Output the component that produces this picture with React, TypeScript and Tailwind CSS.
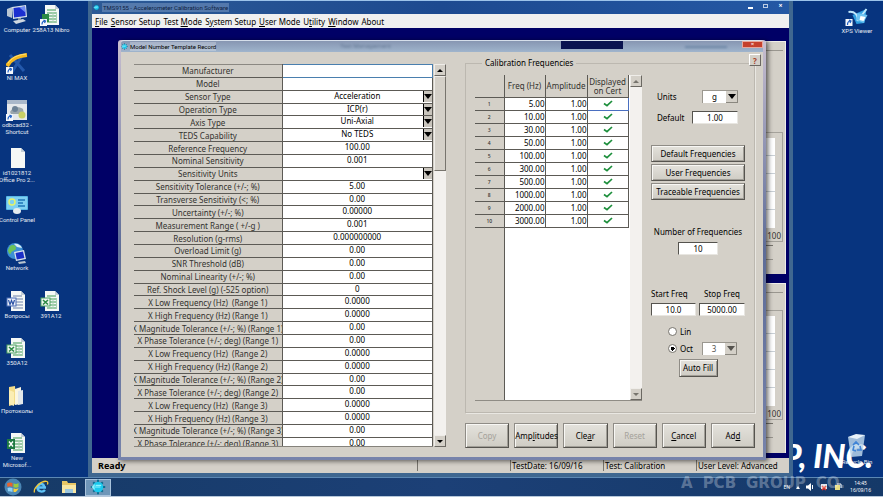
import { useState } from 'react'
import type { ReactNode } from 'react'
import clsx from 'clsx'

type TemplateField = { label: string; value: string; options?: string[] }

const templateFields: TemplateField[] = [
  { label: 'Manufacturer', value: '' },
  { label: 'Model', value: '' },
  { label: 'Sensor Type', value: 'Acceleration', options: ['Acceleration'] },
  { label: 'Operation Type', value: 'ICP(r)', options: ['ICP(r)'] },
  { label: 'Axis Type', value: 'Uni-Axial', options: ['Uni-Axial'] },
  { label: 'TEDS Capability', value: 'No TEDS', options: ['No TEDS'] },
  { label: 'Reference Frequency', value: '100.00' },
  { label: 'Nominal Sensitivity', value: '0.001' },
  { label: 'Sensitivity Units', value: '', options: [''] },
  { label: 'Sensitivity Tolerance (+/-; %)', value: '5.00' },
  { label: 'Transverse Sensitivity (<; %)', value: '0.00' },
  { label: 'Uncertainty (+/-; %)', value: '0.00000' },
  { label: 'Measurement Range ( +/-g )', value: '0.001' },
  { label: 'Resolution (g-rms)', value: '0.000000000' },
  { label: 'Overload Limit (g)', value: '0.00' },
  { label: 'SNR Threshold (dB)', value: '0.00' },
  { label: 'Nominal Linearity (+/-; %)', value: '0.00' },
  { label: 'Ref. Shock Level (g) (-525 option)', value: '0' },
  { label: 'X Low Frequency (Hz)  (Range 1)', value: '0.0000' },
  { label: 'X High Frequency (Hz) (Range 1)', value: '0.0000' },
  { label: 'X Magnitude Tolerance (+/-; %) (Range 1)', value: '0.00' },
  { label: 'X Phase Tolerance (+/-; deg) (Range 1)', value: '0.00' },
  { label: 'X Low Frequency (Hz)  (Range 2)', value: '0.0000' },
  { label: 'X High Frequency (Hz) (Range 2)', value: '0.0000' },
  { label: 'X Magnitude Tolerance (+/-; %) (Range 2)', value: '0.00' },
  { label: 'X Phase Tolerance (+/-; deg) (Range 2)', value: '0.00' },
  { label: 'X Low Frequency (Hz)  (Range 3)', value: '0.0000' },
  { label: 'X High Frequency (Hz) (Range 3)', value: '0.0000' },
  { label: 'X Magnitude Tolerance (+/-; %) (Range 3)', value: '0.00' },
  { label: 'X Phase Tolerance (+/-; deg) (Range 3)', value: '0.00' }
]

const frequencies = ['5.00', '10.00', '30.00', '50.00', '100.00', '300.00', '500.00', '1000.00', '2000.00', '3000.00']

// [before, access key, after]
const menus = [
  ['', 'F', 'ile'],
  ['', 'S', 'ensor Setup'],
  ['Test ', 'M', 'ode'],
  ['S', 'y', 'stem Setup'],
  ['', 'U', 'ser Mode'],
  ['U', 't', 'ility'],
  ['', 'W', 'indow'],
  ['About', '', '']
]

/* ---------- Desktop icons ---------- */

function ShortcutArrow() {
  return (
    <g>
      <rect x="0" y="15" width="7" height="7" fill="#f4f7fb" />
      <path d="M2 20.500c0-2.500 1-3.500 3-3.500M3.500 16l2 1-1 2" stroke="#1d5fc4" strokeWidth="1.200" fill="none" />
    </g>
  )
}

function ComputerIcon() {
  return (
    <svg viewBox="0 0 22 22" className="w-[22px] h-[22px]" aria-hidden="true">
      <path d="M1 5l5-2v11l-5-2z" fill="#b9c6d2" />
      <path d="M6 3l14-2 1 12-14 2z" fill="#d8e2ea" />
      <path d="M7.500 4l11.500-1.500.7 9.500-11.700 1.500z" fill="#1b2fd0" />
      <path d="M13 3.200l6-.7.5 6z" fill="#6f8cf5" />
      <path d="M7 17l10-2 3 2-10 3z" fill="#cfd8e0" />
      <path d="M12 14h3v2h-3z" fill="#8a98a6" />
    </svg>
  )
}

function SheetIcon({ badge, shortcut }: { badge: 'excel' | 'word' | 'none' | 'excel-solid'; shortcut?: boolean }) {
  const line = badge === 'word' ? '#9aa9c4' : '#7cb98a'
  return (
    <svg viewBox="0 0 22 22" className="w-[22px] h-[22px]" aria-hidden="true">
      <path d="M5 1h10l4 4v16H5z" fill="#f5f8f6" />
      <path d="M15 1l4 4h-4z" fill="#c4ced6" />
      {badge !== 'none' && <path d="M7 6h9M7 9h10M7 12h10M7 15h10M7 18h10" stroke={line} strokeWidth="1.400" />}
      {badge.startsWith('excel') && <path d="M13 8v11M16.500 8v11" stroke="#a8d4b2" strokeWidth="1" />}
      {badge === 'excel' && !shortcut && (
        <>
          <rect x="1" y="8" width="9" height="8" fill="#f0f6f1" stroke="#4fa363" />
          <path d="M3 10l5 4.500M8 10l-5 4.500" stroke="#2c8a45" strokeWidth="1.600" />
        </>
      )}
      {badge === 'excel-solid' && (
        <>
          <rect x="1" y="7" width="8" height="10" fill="#1f7a42" />
          <path d="M3 9.500l4 5M7 9.500l-4 5" stroke="#fff" strokeWidth="1.400" />
        </>
      )}
      {badge === 'word' && (
        <>
          <rect x="1" y="8" width="9" height="8" fill="#eef2fa" stroke="#4a6db5" />
          <path d="M2.500 10l1.500 4.500 1.500-4 1.500 4L8.500 10" stroke="#2a52a5" strokeWidth="1.200" fill="none" />
        </>
      )}
      {shortcut && (
        <>
          <rect x="2" y="10" width="7" height="8" fill="#2c8a45" />
          <ShortcutArrow />
        </>
      )}
    </svg>
  )
}

function CurveIcon() {
  return (
    <svg viewBox="0 0 22 22" className="w-[22px] h-[22px]" aria-hidden="true">
      <path d="M4 3l14 16M16 4L6 20" stroke="#2358ab" strokeWidth="3" />
      <path d="M1 14C4 8 9 4 21 3" stroke="#f5b81f" strokeWidth="4" fill="none" />
      <path d="M2 11.500C5 6 11 3 20 2" stroke="#ffe27a" strokeWidth="1" fill="none" />
      <ShortcutArrow />
    </svg>
  )
}

function ProgramIcon() {
  return (
    <svg viewBox="0 0 22 22" className="w-[22px] h-[22px]" aria-hidden="true">
      <rect x="1" y="1" width="20" height="20" fill="#e6e9ec" />
      <rect x="1" y="1" width="20" height="4" fill="#aab8ca" />
      <path d="M4 13c2-5 9-6 13-3l1 5H5z" fill="#9aa6ad" />
      <circle cx="9" cy="10" r="3" fill="#6d8296" />
      <circle cx="16" cy="16" r="3.500" fill="#c9cf66" />
      <ShortcutArrow />
    </svg>
  )
}

function ControlPanelIcon() {
  return (
    <svg viewBox="0 0 22 22" className="w-[22px] h-[22px]" aria-hidden="true">
      <rect x="0" y="2" width="22" height="14" rx="1" fill="#58b7e6" />
      <rect x="1" y="3" width="20" height="12" fill="#7fd0f2" />
      <circle cx="6" cy="8" r="3" fill="none" stroke="#e4f36b" strokeWidth="1.500" />
      <path d="M12 6h7M12 9h5M12 12h7" stroke="#1f76b8" strokeWidth="1.500" />
      <ellipse cx="11" cy="17" rx="4" ry="3" fill="#e5ebef" />
    </svg>
  )
}

function NetworkIcon() {
  return (
    <svg viewBox="0 0 22 22" className="w-[22px] h-[22px]" aria-hidden="true">
      <circle cx="9" cy="9" r="8" fill="#3c8fd4" />
      <path d="M4 4c3-2 6-1 6 2s-4 2-5 5-3-1-3-3zM11 11c3-1 4 1 3 4l-4 1z" fill="#6cc35a" />
      <path d="M8 2c3-1 7 1 8 4l-5-1z" fill="#d8eef7" />
      <path d="M8 10l10-2 2 9-10 2z" fill="#dbe3ec" />
      <path d="M9.500 11l7.500-1.500 1.400 6.500-7.600 1.600z" fill="#1b2fc8" />
      <path d="M12 20l7-1 1 2-7 1z" fill="#b8c4ce" />
    </svg>
  )
}

function FolderIcon() {
  return (
    <svg viewBox="0 0 22 22" className="w-[22px] h-[22px]" aria-hidden="true">
      <path d="M3 2l6-1 1 18-7 2z" fill="#f3dd8a" />
      <path d="M9 4l6-2v17l-6 1z" fill="#fbf6e0" />
      <path d="M12 6l5-1v14l-5 1z" fill="#e2e7ea" />
      <path d="M3 5l5 2v14l-5-2z" fill="#fbeeb4" />
    </svg>
  )
}

function XpsIcon() {
  return (
    <svg viewBox="0 0 24 20" className="w-[25px] h-[20px]" aria-hidden="true">
      <path d="M7 8l14-6-2 14-8 1z" fill="#2f9fe0" />
      <path d="M3 5c6-1 10 3 9 9l9-12" fill="none" stroke="#bfe6fb" strokeWidth="2" />
      <path d="M12 6l10 2-4 8-7-3z" fill="#6ec4f2" />
      <path d="M15 9l5 1-2 4-4-1z" fill="#fff" />
      <rect x="0" y="12" width="7" height="7" fill="#f4f7fb" />
      <path d="M2 18c0-3 1-4 3-4M3.500 13l2 1-1 2" stroke="#1d5fc4" strokeWidth="1.200" fill="none" />
    </svg>
  )
}

function RecycleBinIcon() {
  return (
    <svg viewBox="0 0 20 24" className="w-[20px] h-[24px]" aria-hidden="true">
      <path d="M1 3l17-2-3 21-11 1z" fill="#b9d3ea" opacity="0.850" />
      <path d="M1 3l8-3 9 1-8 4z" fill="#e8f2fa" />
      <path d="M6 11l3-3 3 3M13 12l1 4h-4M9 17l-3-1 1-4" stroke="#3f83d6" strokeWidth="1.600" fill="none" />
    </svg>
  )
}

function AppIcon({ className }: { className: string }) {
  return (
    <svg viewBox="0 0 20 20" className={className} aria-hidden="true">
      <path d="M10 1v18M1 10h18M4 4l12 12M16 4L4 16" stroke="#0b6f92" strokeWidth="2.500" />
      <circle cx="10" cy="10" r="6.500" fill="#19c9ee" />
      <path d="M3 10h10M6 7l-3 3 3 3M7 8h7" stroke="#8df3ff" strokeWidth="1.500" fill="none" />
    </svg>
  )
}

const desktopRows: { icon: ReactNode; label: string }[][] = [
  [{ icon: <ComputerIcon />, label: 'Computer' }, { icon: <SheetIcon badge="excel" shortcut />, label: '258A13 Nibro' }],
  [{ icon: <CurveIcon />, label: 'NI MAX' }],
  [{ icon: <ProgramIcon />, label: 'odbcad32 -\nShortcut' }],
  [{ icon: <SheetIcon badge="none" />, label: 'id1021812\nOffice Pro 2...' }],
  [{ icon: <ControlPanelIcon />, label: 'Control Panel' }],
  [{ icon: <NetworkIcon />, label: 'Network' }],
  [{ icon: <SheetIcon badge="word" />, label: 'Вопросы' }, { icon: <SheetIcon badge="excel" />, label: '391A12' }],
  [{ icon: <SheetIcon badge="excel" />, label: '350A12' }],
  [{ icon: <FolderIcon />, label: 'Протоколы' }],
  [{ icon: <SheetIcon badge="excel-solid" />, label: 'New\nMicrosof...' }]
]

function DesktopIcon({ icon, label }: { icon: ReactNode; label: string }) {
  return (
    <button className="flex w-[34px] flex-col items-center text-center font-[Roboto,sans-serif] text-[6px] leading-[7px] text-white/90">
      {icon}
      <span className="whitespace-pre">{label}</span>
    </button>
  )
}

/* ---------- Classic controls ---------- */

function PushButton({ children, className, disabled }: { children: ReactNode; className?: string; disabled?: boolean }) {
  return (
    <button
      disabled={disabled}
      className={clsx(
        'border border-t-[#8f8c86] border-l-[#8f8c86] border-r-[#56544f] border-b-[#56544f] bg-linear-to-b from-[#e4e2dc] to-[#cfccc4] text-center whitespace-nowrap',
        'shadow-[inset_1px_1px_0_#f8f7f4,inset_-1px_-1px_0_#a19e97]',
        disabled ? 'text-[#a5a29b]' : 'text-black',
        className
      )}
    >
      {children}
    </button>
  )
}

function DownArrow() {
  return (
    <svg viewBox="0 0 8 5" className="h-[5px] w-[8px]" aria-hidden="true">
      <path d="M0 0h8L4 5z" fill="currentColor" />
    </svg>
  )
}

function DropDown({ id, value, options, className, label }: { id?: string; value: string; options: string[]; className?: string; label?: string }) {
  return (
    <div className={clsx('flex h-[13px] border-t border-l border-[#9a978f] bg-white', className)}>
      <select
        id={id}
        aria-label={label}
        defaultValue={value}
        className="min-w-0 flex-1 appearance-none text-center [text-align-last:center] leading-[12px] outline-none"
      >
        {options.map((o) => <option key={o}>{o}</option>)}
      </select>
      <span className="flex w-[12px] items-center justify-center border-r border-b border-[#8a877f] bg-[#d4d0c8]">
        <DownArrow />
      </span>
    </div>
  )
}

const sunken = 'h-[13px] border border-t-[#55534e] border-l-[#55534e] border-r-[#e8e6e1] border-b-[#e8e6e1] bg-white text-center leading-[11px] outline-none'

function ScrollArrow({ up }: { up?: boolean }) {
  return (
    <button
      aria-label={up ? 'Scroll up' : 'Scroll down'}
      className="flex h-[12px] w-full items-center justify-center border border-t-[#efede9] border-l-[#efede9] border-r-[#6b6862] border-b-[#6b6862] bg-[#d4d0c8]"
    >
      <svg viewBox="0 0 6 3" className="h-[3px] w-[6px]" aria-hidden="true">
        <path d={up ? 'M0 3h6L3 0z' : 'M0 0h6L3 3z'} fill="currentColor" />
      </svg>
    </button>
  )
}

/* ---------- Dialog ---------- */

function TemplateTable() {
  return (
    <div className="flex min-h-0 gap-px">
      <div className="min-w-0 flex-1 overflow-hidden border-b border-[#85827b]">
        <table className="h-[387px] w-full table-fixed border-collapse">
          <colgroup>
            <col className="w-[148px]" />
            <col />
          </colgroup>
          <tbody>
            {templateFields.map((f, i) => (
              <tr key={f.label}>
                <th scope="row" className="overflow-hidden border-y border-r border-[#5c5a55] border-t-[#8b8882] p-0 font-normal">
                  <label htmlFor={`field-${i}`} className="flex h-[11px] items-end justify-center leading-[10px] whitespace-pre text-[#33322f]">
                    {f.label}
                  </label>
                </th>
                <td className={clsx('border bg-white p-0 align-top', i === 0 ? 'border-[#4a7fae]' : 'border-[#5c5a55]')}>
                  {f.options ? (
                    <div className="flex h-[11px]">
                      <select
                        id={`field-${i}`}
                        defaultValue={f.value}
                        className="h-[10px] min-w-0 flex-1 appearance-none pl-[9px] text-center [text-align-last:center] leading-[10px] outline-none"
                      >
                        {f.options.map((o) => <option key={o}>{o}</option>)}
                      </select>
                      <span className="flex w-[9px] items-center justify-center border-l border-black bg-[#c9c5bd]">
                        <DownArrow />
                      </span>
                    </div>
                  ) : (
                    <input id={`field-${i}`} defaultValue={f.value} className="block h-[10px] w-full text-center leading-[10px] outline-none" />
                  )}
                </td>
              </tr>
            ))}
          </tbody>
        </table>
      </div>
      <div className="flex w-[12px] flex-col bg-[#f3f1ee]">
        <ScrollArrow up />
        <div className="h-[95px] border border-t-[#efede9] border-l-[#efede9] border-r-[#77746d] border-b-[#77746d] bg-[#d4d0c8]" />
        <div className="flex-1" />
        <ScrollArrow />
      </div>
    </div>
  )
}

function FrequencyTable() {
  return (
    <div className="flex w-[167px] border-b border-[#8f8c85]">
      <table className="h-full w-[153px] table-fixed border-collapse bg-white">
        <colgroup>
          <col className="w-[29px]" />
          <col className="w-[41px]" />
          <col className="w-[42px]" />
          <col className="w-[41px]" />
        </colgroup>
        <thead>
          <tr className="h-[22px] bg-[#d4d0c8] leading-[9px] text-[#33322f]">
            <th className="border-r border-b border-[#5c5a55] p-0" aria-label="Row" />
            <th className="border-r border-b border-[#5c5a55] p-0 font-normal">Freq (Hz)</th>
            <th className="border-r border-b border-[#5c5a55] p-0 font-normal">Amplitude</th>
            <th className="border-r border-b border-[#5c5a55] p-0 font-normal">Displayed on Cert</th>
          </tr>
        </thead>
        <tbody>
          {frequencies.map((freq, i) => (
            <tr key={freq} className="h-[13px]">
              <th scope="row" className="border border-l-0 border-[#5c5a55] bg-[#d4d0c8] p-0 text-[5px] leading-[10px] font-medium text-[#33322f]">
                {i + 1}
              </th>
              <td className="border border-[#5c5a55] p-0 text-right leading-[10px]">{freq}</td>
              <td className="border border-[#5c5a55] p-0 text-right leading-[10px]">1.00</td>
              <td className={clsx('border p-0', i === 0 ? 'border-[#4a6fc0]' : 'border-[#5c5a55]')}>
                <svg viewBox="0 0 10 7" className="mx-auto h-[7px] w-[10px]" role="img" aria-label="Displayed">
                  <path d="M1 3.500l3 2.200L9 1" fill="none" stroke="#1d8f3c" strokeWidth="1.700" />
                </svg>
              </td>
            </tr>
          ))}
          <tr>
            <td className="border-r border-[#5c5a55] bg-[#d4d0c8] p-0" />
            <td colSpan={3} className="p-0" />
          </tr>
        </tbody>
      </table>
      <div className="w-[2px] bg-white" />
      <div className="flex w-[12px] flex-col bg-[#f3f1ee] text-[#77746d]">
        <ScrollArrow up />
        <div className="flex-1" />
        <ScrollArrow />
      </div>
    </div>
  )
}

function FrequencyControls() {
  const [spacing, setSpacing] = useState('oct')

  return (
    <div className="flex w-[94px] flex-col">
      <div className="mt-[15px] flex items-center justify-between pr-[7px] pl-[6px]">
        <label htmlFor="units">Units</label>
        <DropDown id="units" value="g" options={['g']} className="w-[36px]" />
      </div>
      <div className="mt-2 flex items-center justify-between pr-[7px] pl-[6px]">
        <label htmlFor="default-amp">Default</label>
        <input id="default-amp" defaultValue="1.00" className={clsx(sunken, 'w-[46px]')} />
      </div>

      <div className="mt-[21px] flex flex-col gap-[2px]">
        <PushButton className="h-[17px]">Default Frequencies</PushButton>
        <PushButton className="h-[17px]">User Frequencies</PushButton>
        <PushButton className="h-[17px]">Traceable Frequencies</PushButton>
      </div>

      <div className="mt-[26px] flex flex-col items-center gap-1">
        <label htmlFor="freq-count" className="leading-[12px] whitespace-nowrap">Number of Frequencies</label>
        <input id="freq-count" defaultValue="10" className={clsx(sunken, 'w-[40px]')} />
      </div>

      <div className="mt-[33px] flex justify-between">
        <div className="flex flex-col gap-[3px]">
          <label htmlFor="start-freq" className="leading-[12px]">Start Freq</label>
          <input id="start-freq" defaultValue="10.0" className={clsx(sunken, 'w-[45px]')} />
        </div>
        <div className="flex flex-col items-center gap-[3px]">
          <label htmlFor="stop-freq" className="leading-[12px]">Stop Freq</label>
          <input id="stop-freq" defaultValue="5000.00" className={clsx(sunken, 'w-[46px]')} />
        </div>
      </div>

      <div className="mt-[9px] flex flex-col gap-1 pl-[17px]">
        <label className="flex h-[13px] items-center gap-[3px]">
          <input
            type="radio"
            name="spacing"
            checked={spacing === 'lin'}
            onChange={() => setSpacing('lin')}
            className="h-[9px] w-[9px] appearance-none rounded-full border border-[#77746d] bg-white checked:bg-[radial-gradient(circle,#000_2px,#fff_2px)]"
          />
          Lin
        </label>
        <div className="flex h-[13px] items-center">
          <label className="flex items-center gap-[3px]">
            <input
              type="radio"
              name="spacing"
              checked={spacing === 'oct'}
              onChange={() => setSpacing('oct')}
              className="h-[9px] w-[9px] appearance-none rounded-full border border-[#77746d] bg-white checked:bg-[radial-gradient(circle,#000_2px,#fff_2px)]"
            />
            Oct
          </label>
          <DropDown label="Steps per octave" value="3" options={['3']} className="mr-[8px] ml-auto w-[35px] text-[#55534e]" />
        </div>
      </div>

      <PushButton className="mt-1 h-[18px] w-[39px] self-center">Auto Fill</PushButton>
    </div>
  )
}

function TemplateDialog() {
  return (
    <section
      aria-label="Model Number Template Record"
      className="absolute top-[39px] right-[117px] bottom-[17px] left-[118px] flex flex-col rounded-t-[3px] bg-linear-to-b from-[#c9bfd0] via-[#5d6c98] to-[#7783ab] px-[3px] pb-[3px] shadow-[2px_1px_5px_rgba(0,0,0,0.6)]"
    >
      <header className="flex h-[12px] shrink-0 items-center rounded-t-[3px] border-t border-[#d5deea] bg-linear-to-b from-[#8796b2] to-[#9fb4cc]">
        <AppIcon className="h-[7px] w-[7px]" />
        <h2 className="ml-[2px] bg-white/25 font-[Roboto,sans-serif] text-[6px] leading-[9px] text-black">Model Number Template Record</h2>
        <span className="ml-[124px] text-[6px] leading-[9px] text-[#4d6480] opacity-70 blur-[1px]">Test Management</span>
        <div className="ml-auto h-[8px] w-[62px] self-start bg-[#0a1350]" />
        <div className="mr-[15px] ml-[62px] h-[2px] w-[42px] bg-[#6d87a6] blur-[1px]" />
        <button aria-label="Close" className="flex h-[7px] w-[21px] items-center justify-center self-start border border-[#e7a79b] bg-[#c5402c] text-[6px] leading-[5px] text-white">
          ×
        </button>
      </header>

      <div className="relative grid min-h-0 flex-1 grid-cols-[minmax(0,1fr)_290px] grid-rows-[minmax(0,1fr)] gap-[19px] bg-[#d4d0c8] pr-[8px] pl-[13px]">
        <div className="mt-3 mb-[10px] grid min-h-0 grid-rows-[minmax(0,1fr)]">
          <TemplateTable />
        </div>

        <div className="flex min-h-0 flex-col pt-[5px] pb-[9px]">
          <fieldset className="flex flex-1 flex-col border border-[#bcb8b0] px-[9px] pb-[11px] shadow-[1px_1px_0_#e9e7e2]">
            <legend className="ml-[7px] px-[3px] leading-[12px]">Calibration Frequencies</legend>
            <div className="flex flex-1 justify-between pt-[6px]">
              <FrequencyTable />
              <FrequencyControls />
            </div>
          </fieldset>

          <div className="mt-[10px] grid grid-cols-6 gap-[5px]">
            <PushButton className="h-[25px]" disabled>Copy</PushButton>
            <PushButton className="h-[25px]">Amp<u>l</u>itudes</PushButton>
            <PushButton className="h-[25px]">Cle<u>a</u>r</PushButton>
            <PushButton className="h-[25px]" disabled>Reset</PushButton>
            <PushButton className="h-[25px]"><u>C</u>ancel</PushButton>
            <PushButton className="h-[25px]">Ad<u>d</u></PushButton>
          </div>
        </div>

        <button
          aria-label="Help"
          className="absolute top-[2px] right-[2px] h-[12px] w-[12px] border border-t-white border-l-white border-r-[#6b6862] border-b-[#6b6862] bg-[#d4d0c8] leading-[9px] font-bold text-[#a8442a]"
        >
          ?
        </button>
      </div>
    </section>
  )
}

/* ---------- Main window ---------- */

function ChartWindow({ plotClass }: { plotClass: string }) {
  return (
    <div className="flex min-h-0 flex-col items-end border-t border-r border-[#efede9] bg-[#d4d0c8] pr-[2px]">
      <div className="mt-[8px] h-px w-[60px] bg-[#99968f]" />
      <div className={clsx('flex h-[110px] w-[60px] flex-col border border-[#a5a29b] pt-[5px]', plotClass)}>
        <div className="mr-[7px] ml-auto grid h-[90px] w-[50px] grid-rows-5 divide-y divide-[#c9d0d6] bg-white">
          <div /><div /><div /><div /><div />
        </div>
        <span className="mt-[3px] pr-px text-right leading-[10px] text-[#33322f]">100</span>
      </div>
      <div className="mt-[3px] mr-[10px] h-px w-[50px] bg-[#77746d]" />
      <div className="mt-[13px] mr-[10px] h-px w-[50px] bg-[#99968f]" />
    </div>
  )
}

function MainWindow() {
  return (
    <main className="absolute inset-y-0 right-[90px] left-[88px] flex flex-col border-x-4 border-b-4 border-[#3f6790] bg-[#1d4a8c]">
      <header className="flex h-[13px] shrink-0 items-center bg-linear-to-r from-[#2c5a96] via-[#1d4a90] to-[#2458a4]">
        <AppIcon className="ml-px h-[7px] w-[7px]" />
        <h1 className="ml-[2px] bg-[#7f9cc4]/50 px-px font-[Roboto,sans-serif] text-[6px] leading-[9px] text-[#0d2142]">TMS9155 - Accelerometer Calibration Software</h1>
        <div className="mr-1 ml-auto flex h-[10px] items-center gap-[6px] self-start text-[7px] leading-[8px] text-white">
          <button aria-label="Minimize" className="w-[9px]"><span className="mx-auto mt-[3px] block h-[2px] w-[5px] bg-white" /></button>
          <button aria-label="Maximize" className="w-[9px]"><span className="mx-auto block h-[4px] w-[5px] border border-white/70" /></button>
          <button aria-label="Close" className="w-[9px] font-bold">×</button>
        </div>
      </header>

      <nav className="flex h-[14px] shrink-0 items-center gap-[3px] bg-[#f0f0f0] pl-[3px] leading-[13px]">
        {menus.map(([pre, key, post]) => (
          <button key={pre + key + post} className="whitespace-nowrap">
            {pre}<u>{key}</u>{post}
          </button>
        ))}
      </nav>

      <div className="grid min-h-0 flex-1 grid-rows-[233px_1fr] gap-[9px] bg-[#000066] pt-[13px] pr-[3px] pb-[5px] pl-[600px]">
        <ChartWindow plotClass="mt-[81px]" />
        <ChartWindow plotClass="mt-[17px]" />
      </div>

      <footer className="flex h-[15px] shrink-0 items-stretch bg-[#d4d0c8] py-[2px] leading-[12px]">
        <strong className="flex-1 pl-[6px] text-[9px]">Ready</strong>
        <span className="w-[93px] border-l border-[#77746d]" />
        <span className="w-[93px] border-l border-[#77746d] pl-px">TestDate: 16/09/16</span>
        <span className="w-[93px] border-l border-[#77746d] pl-px">Test: Calibration</span>
        <span className="w-[93px] border-l border-[#77746d] pl-px">User Level: Advanced</span>
      </footer>
    </main>
  )
}

/* ---------- Taskbar ---------- */

function Taskbar() {
  return (
    <footer className="flex h-[20px] shrink-0 items-center border-t border-b border-t-[#5c88b4] border-b-[#b5c7da] bg-linear-to-r from-[#163a66] via-[#1c4077] to-[#153968]">
      <button aria-label="Start" className="ml-[4px]">
        <svg viewBox="0 0 18 18" className="h-[18px] w-[18px]" aria-hidden="true">
          <circle cx="9" cy="9" r="8.500" fill="#4a86b4" />
          <path d="M3 5.500C5 4 7 4.500 8.500 5v4C7 8 5 8 3.500 9z" fill="#e8622c" />
          <path d="M9.500 5.300c2 1 3.500.7 5-.3v4c-1.500 1-3 1-5 .3z" fill="#9bcb3c" />
          <path d="M3.500 10C5 9 7 9.500 8.500 10v4C7 13.500 5 13 4 13.500z" fill="#8fd2f8" />
          <path d="M9.500 10.300c2 1 3.500.7 5-.3-.5 2-1.500 3-2.500 3.700-1 .3-1.700.3-2.500 0z" fill="#fbd03a" />
        </svg>
      </button>
      <button aria-label="Internet Explorer" className="ml-[11px]">
        <svg viewBox="0 0 16 16" className="h-[16px] w-[16px]" aria-hidden="true">
          <path d="M13 8.500H4.500C5 6 6.500 5 8 5s3 1 3.200 3M4.500 9c.5 4 5.500 4.500 7.500 2" fill="none" stroke="#5ec2f5" strokeWidth="2.300" />
          <path d="M1.500 13.500C0 9 9 1 14 2.500c1 .5 1 2 .3 3" fill="none" stroke="#f4c93a" strokeWidth="1.300" />
        </svg>
      </button>
      <button aria-label="Explorer" className="ml-[12px]">
        <svg viewBox="0 0 16 14" className="h-[14px] w-[16px]" aria-hidden="true">
          <path d="M1 1h5l1 2h8v10H1z" fill="#e8c766" />
          <path d="M1 5h14v8H1z" fill="#f8e7a4" />
          <path d="M4 9h8v4H4z" fill="#9cc7e0" />
        </svg>
      </button>
      <button aria-label="TMS9155" className="ml-[8px] flex h-[17px] w-[26px] items-center justify-center border border-[#a9c3dc] bg-[#6f96b8]">
        <AppIcon className="h-[16px] w-[16px]" />
      </button>

      <div className="ml-auto flex items-center gap-[6px] pr-[12px] text-[5px] leading-[7px] text-white">
        <span>EN</span>
        <svg viewBox="0 0 4 3" className="h-[3px] w-[4px]" aria-hidden="true"><path d="M0 3l2-3 2 3z" fill="#fff" /></svg>
        <svg viewBox="0 0 8 8" className="h-[8px] w-[8px]" aria-hidden="true">
          <path d="M0 2.500h2L5 0v8L2 5.500H0z" fill="#fff" />
          <path d="M6.500 2v4" stroke="#fff" />
        </svg>
        <svg viewBox="0 0 8 8" className="h-[8px] w-[8px]" aria-hidden="true">
          <path d="M1 1h6v5H1z" fill="#dfe6ee" />
          <path d="M2 3l4 4M6 3L2 7" stroke="#e0362c" strokeWidth="1.600" />
        </svg>
        <svg viewBox="0 0 8 8" className="h-[8px] w-[8px]" aria-hidden="true">
          <path d="M1 2h5v5H1z" fill="#e9dd83" />
          <path d="M3 1h4v4" fill="none" stroke="#f4f7fb" />
        </svg>
        <time className="ml-[2px] text-center">14:45<br />16/09/16</time>
      </div>
    </footer>
  )
}

export default function App() {
  return (
    <div className="flex h-screen flex-col overflow-hidden border-t border-[#9cc3ea] bg-[#07347f] font-['Noto_Sans','Open_Sans',sans-serif] text-[8px] leading-[12px] text-black">
      <div className="relative min-h-0 flex-1">
        <ul className="flex h-full w-[68px] flex-col">
          {desktopRows.map((row) => (
            <li key={row[0].label} className="flex min-h-0 flex-1 items-start pt-[3px]">
              {row.map((item) => <DesktopIcon key={item.label} {...item} />)}
            </li>
          ))}
        </ul>

        {/* Wallpaper lettering that shows beside the window */}
        <p className="absolute right-[10px] bottom-[4px] font-[Lato,sans-serif] text-[32px] leading-[34px] font-black whitespace-nowrap text-white italic">
          P, INC.
        </p>
        <div className="absolute top-[6px] right-[9px]">
          <DesktopIcon icon={<XpsIcon />} label="XPS Viewer" />
        </div>
        <div className="absolute right-[9px] bottom-[12px]">
          <DesktopIcon icon={<RecycleBinIcon />} label="Recycle Bin" />
        </div>

        <MainWindow />
        <TemplateDialog />
      </div>
      <div className="relative">
        <Taskbar />
        <p className="pointer-events-none absolute right-[38px] bottom-[6px] flex gap-[10px] font-['DejaVu_Sans',sans-serif] text-[15px] leading-[16px] font-bold text-white/30">
          <span>A</span> <span>PCB</span> <span>GROUP</span> <span>CO.</span>
        </p>
      </div>
    </div>
  )
}
